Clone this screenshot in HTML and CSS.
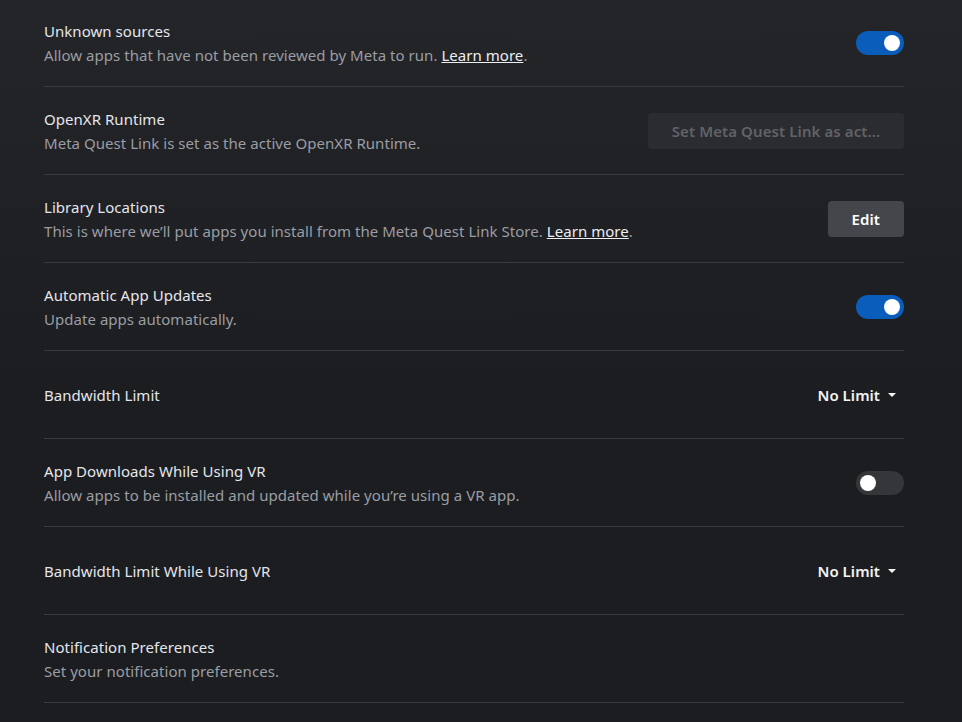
FILE: index.html
```html
<!DOCTYPE html>
<html>
<head>
  <title>Settings</title>
  <link rel="stylesheet" href="styles.css">
</head>
<body>
  <!-- Settings list -->
  <div class="settings">
    <div class="row">
      <div class="info">
        <div class="title">Unknown sources</div>
        <div class="desc">Allow apps that have not been reviewed by Meta to run. <a href="#">Learn more</a>.</div>
      </div>
      <span class="toggle on"><span class="knob"></span></span>
    </div>

    <div class="row">
      <div class="info">
        <div class="title">OpenXR Runtime</div>
        <div class="desc">Meta Quest Link is set as the active OpenXR Runtime.</div>
      </div>
      <button class="btn disabled">Set Meta Quest Link as act...</button>
    </div>

    <div class="row">
      <div class="info">
        <div class="title">Library Locations</div>
        <div class="desc">This is where we&rsquo;ll put apps you install from the Meta Quest Link Store. <a href="#">Learn more</a>.</div>
      </div>
      <button class="btn">Edit</button>
    </div>

    <div class="row">
      <div class="info">
        <div class="title">Automatic App Updates</div>
        <div class="desc">Update apps automatically.</div>
      </div>
      <span class="toggle on"><span class="knob"></span></span>
    </div>

    <div class="row">
      <div class="info">
        <div class="title">Bandwidth Limit</div>
      </div>
      <div class="dropdown">No Limit <span class="caret"></span></div>
    </div>

    <div class="row">
      <div class="info">
        <div class="title">App Downloads While Using VR</div>
        <div class="desc">Allow apps to be installed and updated while you&rsquo;re using a VR app.</div>
      </div>
      <span class="toggle"><span class="knob"></span></span>
    </div>

    <div class="row">
      <div class="info">
        <div class="title">Bandwidth Limit While Using VR</div>
      </div>
      <div class="dropdown">No Limit <span class="caret"></span></div>
    </div>

    <div class="row">
      <div class="info">
        <div class="title">Notification Preferences</div>
        <div class="desc">Set your notification preferences.</div>
      </div>
    </div>
  </div>
</body>
</html>
```

FILE: styles.css
```css
/* Page */
body {
  margin: 0;
  height: 722px;
  overflow: hidden;
  background: linear-gradient(#242529, #1c1d21 55%, #1c1d21);
  font-family: "Noto Sans", "Open Sans", sans-serif;
  font-size: 15px;
  letter-spacing: 0.04px;
  color: #e4e6eb;
}

.settings {
  width: 860px;
  margin: -1px 0 0 44px;
}

/* One setting */
.row {
  display: flex;
  align-items: center;
  justify-content: space-between;
  height: 87px;
  border-bottom: 1px solid #393a3e;
}

.title {
  line-height: 24px;
  color: #e4e6eb;
}

.desc {
  line-height: 24px;
  color: #9a9da3;
}

.desc a {
  color: #eceef1;
  text-decoration: underline;
}

/* Toggle switch */
.toggle {
  display: flex;
  align-items: center;
  width: 48px;
  height: 24px;
  padding: 0 4px;
  box-sizing: border-box;
  border-radius: 12px;
  background: #35363a;
}

.toggle.on {
  background: #0a5dba;
  justify-content: flex-end;
}

.knob {
  width: 16px;
  height: 16px;
  border-radius: 50%;
  background: #fff;
}

/* Buttons */
.btn {
  height: 36px;
  padding: 0 24px;
  border: none;
  border-radius: 4px;
  background: #45464b;
  color: #fff;
  font-family: inherit;
  font-size: 15px;
  font-weight: 600;
  letter-spacing: 0.1px;
}

.btn.disabled {
  width: 256px;
  padding: 0;
  background: #2b2c30;
  color: #606267;
}

/* Dropdown */
.dropdown {
  display: flex;
  align-items: center;
  gap: 8px;
  padding-right: 8px;
  font-weight: 600;
  color: #f2f3f5;
}

.caret {
  width: 0;
  height: 0;
  border-left: 4px solid transparent;
  border-right: 4px solid transparent;
  border-top: 4px solid #f2f3f5;
}
```
